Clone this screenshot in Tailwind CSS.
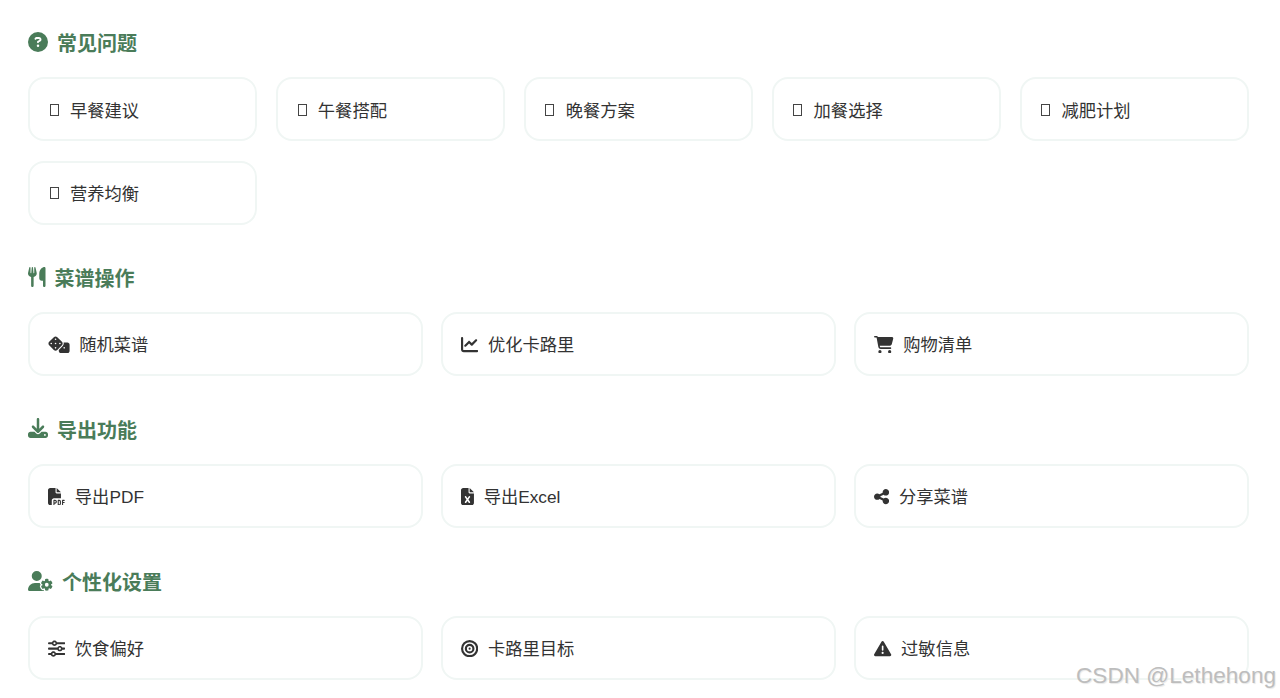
<!DOCTYPE html>
<html lang="zh">
<head>
<meta charset="utf-8">
<script src="https://cdn.jsdelivr.net/npm/@tailwindcss/browser@4"></script>
<title>菜谱助手</title>
</head>
<body class="bg-white font-['Liberation_Sans','Noto_Sans_CJK_SC',sans-serif] text-[#333] overflow-hidden">
<div class="relative h-[698px] overflow-hidden px-[28px] pt-[28px] w-[1277px]">

<h2 class="flex items-center gap-[9px] h-[32px] mb-[17.4px] text-[20px] font-bold text-[#4a7c59]">
<svg class="h-[20px] w-[20px] shrink-0 fill-current -mt-[5px]" viewBox="0 0 512 512"><path d="M256 512A256 256 0 1 0 256 0a256 256 0 1 0 0 512zM169.8 165.3c7.9-22.3 29.1-37.3 52.8-37.3h58.3c34.9 0 63.1 28.3 63.1 63.1c0 22.6-12.1 43.5-31.7 54.8L280 264.4c-.2 13-10.9 23.6-24 23.6c-13.3 0-24-10.7-24-24V250.5c0-8.6 4.6-16.5 12.1-20.8l44.3-25.4c4.7-2.7 7.6-7.7 7.6-13.1c0-8.4-6.8-15.1-15.1-15.1H222.6c-3.4 0-6.4 2.1-7.5 5.3l-.4 1.2c-4.4 12.5-18.2 19-30.6 14.6s-19-18.2-14.6-30.6l.4-1.2zM224 352a32 32 0 1 1 64 0 32 32 0 1 1 -64 0z"/></svg>
<span>常见问题</span></h2>
<div class="grid grid-cols-5 gap-x-[18.4px] gap-y-[19.6px] mb-[38.5px]">
<button class="flex items-center gap-[9.6px] h-[64px] px-[18px] pt-[4.5px] rounded-[16px] border-2 border-[#f0f6f4] bg-white text-[17.28px]"><span class="flex w-[12.4px] justify-center"><span class="block w-[9px] h-[12px] border border-[#444] -mt-[4px]"></span></span>早餐建议</button>
<button class="flex items-center gap-[9.6px] h-[64px] px-[18px] pt-[4.5px] rounded-[16px] border-2 border-[#f0f6f4] bg-white text-[17.28px]"><span class="flex w-[12.4px] justify-center"><span class="block w-[9px] h-[12px] border border-[#444] -mt-[4px]"></span></span>午餐搭配</button>
<button class="flex items-center gap-[9.6px] h-[64px] px-[18px] pt-[4.5px] rounded-[16px] border-2 border-[#f0f6f4] bg-white text-[17.28px]"><span class="flex w-[12.4px] justify-center"><span class="block w-[9px] h-[12px] border border-[#444] -mt-[4px]"></span></span>晚餐方案</button>
<button class="flex items-center gap-[9.6px] h-[64px] px-[18px] pt-[4.5px] rounded-[16px] border-2 border-[#f0f6f4] bg-white text-[17.28px]"><span class="flex w-[12.4px] justify-center"><span class="block w-[9px] h-[12px] border border-[#444] -mt-[4px]"></span></span>加餐选择</button>
<button class="flex items-center gap-[9.6px] h-[64px] px-[18px] pt-[4.5px] rounded-[16px] border-2 border-[#f0f6f4] bg-white text-[17.28px]"><span class="flex w-[12.4px] justify-center"><span class="block w-[9px] h-[12px] border border-[#444] -mt-[4px]"></span></span>减肥计划</button>
<button class="flex items-center gap-[9.6px] h-[64px] px-[18px] pt-[4.5px] rounded-[16px] border-2 border-[#f0f6f4] bg-white text-[17.28px]"><span class="flex w-[12.4px] justify-center"><span class="block w-[9px] h-[12px] border border-[#444] -mt-[4px]"></span></span>营养均衡</button>
</div>

<h2 class="flex items-center gap-[9px] h-[32px] mb-[16.5px] text-[20px] font-bold text-[#4a7c59]">
<svg class="h-[20px] w-[17.5px] shrink-0 fill-current -mt-[5px]" viewBox="0 0 448 512"><path d="M416 0C400 0 288 32 288 176V288c0 35.3 28.7 64 64 64h32V480c0 17.7 14.3 32 32 32s32-14.3 32-32V352 240 32c0-17.7-14.3-32-32-32zM64 16C64 7.8 57.9 1 49.7 .1S34.2 4.6 32.4 12.5L2.1 148.8C.7 155.1 0 161.5 0 167.9c0 45.9 35.1 83.6 80 87.7V480c0 17.7 14.3 32 32 32s32-14.3 32-32V255.6c44.9-4.1 80-41.8 80-87.7c0-6.4-.7-12.8-2.1-19.1L191.6 12.5c-1.8-8-9.3-13.3-17.4-12.4S160 7.8 160 16V150.2c0 5.4-4.4 9.8-9.8 9.8c-5.1 0-9.3-3.9-9.8-9L127.9 14.6C127.2 6.3 120.3 0 112 0s-15.2 6.3-15.9 14.6L83.7 151c-.5 5.1-4.7 9-9.8 9c-5.4 0-9.8-4.4-9.8-9.8V16z"/></svg>
<span>菜谱操作</span></h2>
<div class="grid grid-cols-3 gap-[18.4px] mb-[39px]">
<button class="flex items-center gap-[9.6px] h-[64px] px-[18px] pt-[4.5px] rounded-[16px] border-2 border-[#f0f6f4] bg-white text-[17.28px]">
<svg class="h-[17.28px] w-[21.6px] shrink-0 fill-current -mt-[4px]" viewBox="0 0 640 512"><path d="M274.9 34.3c-28.1-28.1-73.7-28.1-101.8 0L34.3 173.1c-28.1 28.1-28.1 73.7 0 101.8L173.1 413.7c28.1 28.1 73.7 28.1 101.8 0L413.7 274.9c28.1-28.1 28.1-73.7 0-101.8L274.9 34.3zM200 224a24 24 0 1 1 48 0 24 24 0 1 1 -48 0zM96 200a24 24 0 1 1 0 48 24 24 0 1 1 0-48zM224 376a24 24 0 1 1 0-48 24 24 0 1 1 0 48zM352 200a24 24 0 1 1 0 48 24 24 0 1 1 0-48zM224 120a24 24 0 1 1 0-48 24 24 0 1 1 0 48zm96 328c0 35.3 28.7 64 64 64H576c35.3 0 64-28.7 64-64V256c0-35.3-28.7-64-64-64H461.7c11.6 36 3.1 77-25.4 105.5L320 413.8V448zM480 328a24 24 0 1 1 0 48 24 24 0 1 1 0-48z"/></svg>随机菜谱</button>
<button class="flex items-center gap-[9.6px] h-[64px] px-[18px] pt-[4.5px] rounded-[16px] border-2 border-[#f0f6f4] bg-white text-[17.28px]">
<svg class="h-[17.28px] w-[17.28px] shrink-0 fill-current -mt-[4px]" viewBox="0 0 512 512"><path d="M64 64c0-17.7-14.3-32-32-32S0 46.3 0 64V400c0 44.2 35.8 80 80 80H480c17.7 0 32-14.3 32-32s-14.3-32-32-32H80c-8.8 0-16-7.2-16-16V64zm406.6 86.6c12.5-12.5 12.5-32.8 0-45.3s-32.8-12.5-45.3 0L320 210.7l-57.4-57.4c-12.5-12.5-32.8-12.5-45.3 0l-112 112c-12.5 12.5-12.5 32.8 0 45.3s32.8 12.5 45.3 0L240 221.3l57.4 57.4c12.5 12.5 32.8 12.5 45.3 0l128-128z"/></svg>优化卡路里</button>
<button class="flex items-center gap-[9.6px] h-[64px] px-[18px] pt-[4.5px] rounded-[16px] border-2 border-[#f0f6f4] bg-white text-[17.28px]">
<svg class="h-[17.28px] w-[19.44px] shrink-0 fill-current -mt-[4px]" viewBox="0 0 576 512"><path d="M0 24C0 10.7 10.7 0 24 0H69.5c22 0 41.5 12.8 50.6 32h411c26.3 0 45.5 25 38.6 50.4l-41 152.3c-8.5 31.4-37 53.3-69.5 53.3H170.7l5.4 28.5c2.2 11.3 12.1 19.5 23.6 19.5H488c13.3 0 24 10.7 24 24s-10.7 24-24 24H199.7c-34.6 0-64.3-24.6-70.7-58.5L77.4 54.5c-.7-3.8-4-6.5-7.9-6.5H24C10.7 48 0 37.3 0 24zM128 464a48 48 0 1 1 96 0 48 48 0 1 1 -96 0zm336-48a48 48 0 1 1 0 96 48 48 0 1 1 0-96z"/></svg>购物清单</button>
</div>

<h2 class="flex items-center gap-[9px] h-[32px] mb-[17px] text-[20px] font-bold text-[#4a7c59]">
<svg class="h-[20px] w-[20px] shrink-0 fill-current -mt-[5px]" viewBox="0 0 512 512"><path d="M288 32c0-17.7-14.3-32-32-32s-32 14.3-32 32V274.7l-73.4-73.4c-12.5-12.5-32.8-12.5-45.3 0s-12.5 32.8 0 45.3l128 128c12.5 12.5 32.8 12.5 45.3 0l128-128c12.5-12.5 12.5-32.8 0-45.3s-32.8-12.5-45.3 0L288 274.7V32zM64 352c-35.3 0-64 28.7-64 64v32c0 35.3 28.7 64 64 64H448c35.3 0 64-28.7 64-64V416c0-35.3-28.7-64-64-64H346.5l-45.3 45.3c-25 25-65.5 25-90.5 0L165.5 352H64zm368 56a24 24 0 1 1 0 48 24 24 0 1 1 0-48z"/></svg>
<span>导出功能</span></h2>
<div class="grid grid-cols-3 gap-[18.4px] mb-[39.5px]">
<button class="flex items-center gap-[9.6px] h-[64px] px-[18px] pt-[4.5px] rounded-[16px] border-2 border-[#f0f6f4] bg-white text-[17.28px]">
<svg class="h-[17.28px] w-[17.28px] shrink-0 fill-current -mt-[4px]" viewBox="0 0 512 512"><path d="M0 64C0 28.7 28.7 0 64 0H224V128c0 17.7 14.3 32 32 32H384V304H176c-35.3 0-64 28.7-64 64V512H64c-35.3 0-64-28.7-64-64V64zm384 64H256V0L384 128zM176 352h32c30.9 0 56 25.1 56 56s-25.1 56-56 56H192v32c0 8.8-7.2 16-16 16s-16-7.2-16-16V448 368c0-8.8 7.2-16 16-16zm32 80c13.3 0 24-10.7 24-24s-10.7-24-24-24H192v48h16zm96-80h32c26.5 0 48 21.5 48 48v64c0 26.5-21.5 48-48 48H304c-8.8 0-16-7.2-16-16V368c0-8.8 7.2-16 16-16zm32 128c8.8 0 16-7.2 16-16V400c0-8.8-7.2-16-16-16H320v96h16zm80-112c0-8.8 7.2-16 16-16h48c8.8 0 16 7.2 16 16s-7.2 16-16 16H448v32h32c8.8 0 16 7.2 16 16s-7.2 16-16 16H448v48c0 8.8-7.2 16-16 16s-16-7.2-16-16V432 368z"/></svg>导出PDF</button>
<button class="flex items-center gap-[9.6px] h-[64px] px-[18px] pt-[4.5px] rounded-[16px] border-2 border-[#f0f6f4] bg-white text-[17.28px]">
<svg class="h-[17.28px] w-[12.96px] shrink-0 fill-current -mt-[4px]" viewBox="0 0 384 512"><path d="M64 0C28.7 0 0 28.7 0 64V448c0 35.3 28.7 64 64 64H320c35.3 0 64-28.7 64-64V160H256c-17.7 0-32-14.3-32-32V0H64zM256 0V128H384L256 0zM155.7 250.2L192 302.1l36.3-51.9c7.6-10.9 22.6-13.5 33.4-5.9s13.5 22.6 5.9 33.4L221.3 344l46.4 66.2c7.6 10.9 5 25.8-5.9 33.4s-25.8 5-33.4-5.9L192 385.8l-36.3 51.9c-7.6 10.9-22.6 13.5-33.4 5.9s-13.5-22.6-5.9-33.4L162.7 344l-46.4-66.2c-7.6-10.9-5-25.8 5.9-33.4s25.8-5 33.4 5.9z"/></svg>导出Excel</button>
<button class="flex items-center gap-[9.6px] h-[64px] px-[18px] pt-[4.5px] rounded-[16px] border-2 border-[#f0f6f4] bg-white text-[17.28px]">
<svg class="h-[17.28px] w-[15.12px] shrink-0 fill-current -mt-[4px]" viewBox="0 0 448 512"><path d="M352 224c53 0 96-43 96-96s-43-96-96-96s-96 43-96 96c0 4 .2 8 .7 11.9l-94.1 47C145.4 170.2 121.9 160 96 160c-53 0-96 43-96 96s43 96 96 96c25.9 0 49.4-10.2 66.6-26.9l94.1 47c-.5 3.9-.7 7.8-.7 11.9c0 53 43 96 96 96s96-43 96-96s-43-96-96-96c-25.9 0-49.4 10.2-66.6 26.9l-94.1-47c.5-3.9 .7-7.8 .7-11.9s-.2-8-.7-11.9l94.1-47C302.6 213.8 326.1 224 352 224z"/></svg>分享菜谱</button>
</div>

<h2 class="flex items-center gap-[9px] h-[32px] mb-[16.5px] text-[20px] font-bold text-[#4a7c59]">
<svg class="h-[20px] w-[25px] shrink-0 fill-current -mt-[5px]" viewBox="0 0 640 512"><path d="M224 0a128 128 0 1 1 0 256A128 128 0 1 1 224 0zM178.3 304h91.4c11.8 0 23.4 1.2 34.5 3.3c-2.1 18.5 7.4 35.6 21.8 44.8c-16.6 10.6-26.7 31.6-20 53.3c4 12.9 9.4 25.5 16.4 37.6s15.2 23.1 24.4 33c15.7 16.9 39.6 18.4 57.2 8.7v.9c0 9.2 2.7 18.5 7.9 26.3H29.7C13.3 512 0 498.7 0 482.3C0 383.8 79.8 304 178.3 304zM436 218.2c0-7 4.5-13.3 11.3-14.8c10.5-2.4 21.5-3.7 32.7-3.7s22.2 1.3 32.7 3.7c6.8 1.5 11.3 7.8 11.3 14.8v30.6c7.9 3.4 15.4 7.7 22.3 12.8l24.9-14.3c6.1-3.5 13.7-2.7 18.5 2.4c7.6 8.1 14.3 17.2 20.1 27.2s10.3 20.4 13.5 31c2.1 6.7-1.1 13.7-7.2 17.2l-25 14.4c.4 4 .7 8.1 .7 12.3s-.2 8.2-.7 12.3l25 14.4c6.1 3.5 9.2 10.5 7.2 17.2c-3.3 10.6-7.8 21-13.5 31s-12.5 19.1-20.1 27.2c-4.8 5.1-12.5 5.9-18.5 2.4l-24.9-14.3c-6.9 5.1-14.3 9.4-22.3 12.8l0 30.6c0 7-4.5 13.3-11.3 14.8c-10.5 2.4-21.5 3.7-32.7 3.7s-22.2-1.3-32.7-3.7c-6.8-1.5-11.3-7.8-11.3-14.8V454.8c-8-3.4-15.6-7.7-22.5-12.9l-24.7 14.3c-6.1 3.5-13.7 2.7-18.5-2.4c-7.6-8.1-14.3-17.2-20.1-27.2s-10.3-20.4-13.5-31c-2.1-6.7 1.1-13.7 7.2-17.2l24.8-14.3c-.4-4.1-.7-8.2-.7-12.4s.2-8.3 .7-12.4L343.8 325c-6.1-3.5-9.2-10.5-7.2-17.2c3.3-10.6 7.7-21 13.5-31s12.5-19.1 20.1-27.2c4.8-5.1 12.4-5.9 18.5-2.4l24.8 14.3c6.9-5.1 14.5-9.4 22.5-12.9V218.2zm92.1 133.5a48.1 48.1 0 1 0 -96.1 0 48.1 48.1 0 1 0 96.1 0z"/></svg>
<span>个性化设置</span></h2>
<div class="grid grid-cols-3 gap-[18.4px]">
<button class="flex items-center gap-[9.6px] h-[64px] px-[18px] pt-[4.5px] rounded-[16px] border-2 border-[#f0f6f4] bg-white text-[17.28px]">
<svg class="h-[17.28px] w-[17.28px] shrink-0 fill-current -mt-[4px]" viewBox="0 0 512 512"><path d="M0 416c0 17.7 14.3 32 32 32l54.7 0c12.3 28.3 40.5 48 73.3 48s61-19.7 73.3-48L480 448c17.7 0 32-14.3 32-32s-14.3-32-32-32l-246.7 0c-12.3-28.3-40.5-48-73.3-48s-61 19.7-73.3 48L32 384c-17.7 0-32 14.3-32 32zm128 0a32 32 0 1 1 64 0 32 32 0 1 1 -64 0zM320 256a32 32 0 1 1 64 0 32 32 0 1 1 -64 0zm32-80c-32.8 0-61 19.7-73.3 48L32 224c-17.7 0-32 14.3-32 32s14.3 32 32 32l246.7 0c12.3 28.3 40.5 48 73.3 48s61-19.7 73.3-48l54.7 0c17.7 0 32-14.3 32-32s-14.3-32-32-32l-54.7 0c-12.3-28.3-40.5-48-73.3-48zM192 128a32 32 0 1 1 0-64 32 32 0 1 1 0 64zm73.3-64C253 35.7 224.8 16 192 16s-61 19.7-73.3 48L32 64C14.3 64 0 78.3 0 96s14.3 32 32 32l86.7 0c12.3 28.3 40.5 48 73.3 48s61-19.7 73.3-48L480 128c17.7 0 32-14.3 32-32s-14.3-32-32-32L265.3 64z"/></svg>饮食偏好</button>
<button class="flex items-center gap-[9.6px] h-[64px] px-[18px] pt-[4.5px] rounded-[16px] border-2 border-[#f0f6f4] bg-white text-[17.28px]">
<svg class="h-[17.28px] w-[17.28px] shrink-0 fill-current -mt-[4px]" viewBox="0 0 512 512"><path d="M448 256A192 192 0 1 0 64 256a192 192 0 1 0 384 0zM0 256a256 256 0 1 1 512 0A256 256 0 1 1 0 256zm256 80a80 80 0 1 0 0-160 80 80 0 1 0 0 160zm0-224a144 144 0 1 1 0 288 144 144 0 1 1 0-288zM224 256a32 32 0 1 1 64 0 32 32 0 1 1 -64 0z"/></svg>卡路里目标</button>
<button class="flex items-center gap-[9.6px] h-[64px] px-[18px] pt-[4.5px] rounded-[16px] border-2 border-[#f0f6f4] bg-white text-[17.28px]">
<svg class="h-[17.28px] w-[17.28px] shrink-0 fill-current -mt-[4px]" viewBox="0 0 512 512"><path d="M256 32c14.2 0 27.3 7.5 34.5 19.8l216 368c7.3 12.4 7.3 27.7 .2 40.1S486.3 480 472 480H40c-14.3 0-27.6-7.7-34.7-20.1s-7-27.8 .2-40.1l216-368C228.7 39.5 241.8 32 256 32zm0 128c-13.3 0-24 10.7-24 24V296c0 13.3 10.7 24 24 24s24-10.7 24-24V184c0-13.3-10.7-24-24-24zm32 224a32 32 0 1 0 -64 0 32 32 0 1 0 64 0z"/></svg>过敏信息</button>
</div>

<span class="absolute left-[1076px] top-[663px] text-[22.6px] leading-[26px] whitespace-nowrap text-[#bdbdbd] [text-shadow:1px_1px_1px_#e8e8e8]">CSDN @Lethehong</span>
</div>
</body>
</html>
